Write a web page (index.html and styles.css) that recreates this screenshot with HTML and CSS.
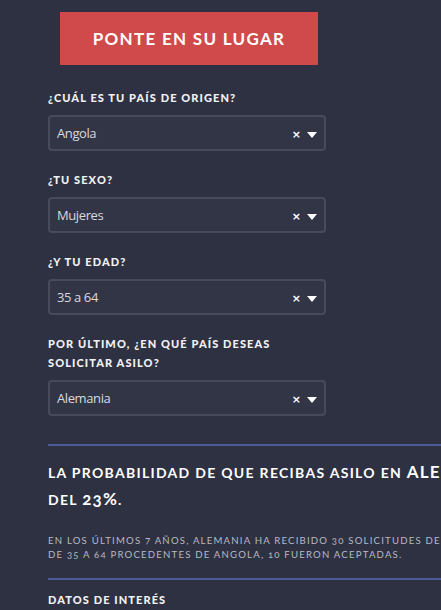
FILE: index.html
```html
<!DOCTYPE html>
<html lang="es">
<head>
<meta charset="utf-8">
<link rel="stylesheet" href="styles.css">
</head>
<body>
<div class="page">
  <div class="btn">PONTE EN SU LUGAR</div>

  <div class="field first">
    <div class="label">¿CUÁL ES TU PAÍS DE ORIGEN?</div>
    <div class="select"><span class="value">Angola</span><span class="ctrl"><span class="clear">×</span><span class="arrow"></span></span></div>
  </div>
  <div class="field">
    <div class="label">¿TU SEXO?</div>
    <div class="select"><span class="value">Mujeres</span><span class="ctrl"><span class="clear">×</span><span class="arrow"></span></span></div>
  </div>
  <div class="field">
    <div class="label">¿Y TU EDAD?</div>
    <div class="select"><span class="value">35 a 64</span><span class="ctrl"><span class="clear">×</span><span class="arrow"></span></span></div>
  </div>
  <div class="field">
    <div class="label narrow">POR ÚLTIMO, ¿EN QUÉ PAÍS DESEAS SOLICITAR ASILO?</div>
    <div class="select"><span class="value">Alemania</span><span class="ctrl"><span class="clear">×</span><span class="arrow"></span></span></div>
  </div>

  <div class="result">
    <hr class="rule">
    <h2 class="headline">LA PROBABILIDAD DE QUE RECIBAS ASILO EN <span class="big">ALEMANIA</span> ES DEL <span class="big">23%</span>.</h2>
    <p class="detail">EN LOS ÚLTIMOS 7 AÑOS, ALEMANIA HA RECIBIDO 30 SOLICITUDES DE ASILO DE MUJERES DE 35 A 64 PROCEDENTES DE ANGOLA, 10 FUERON ACEPTADAS.</p>
    <hr class="rule">
    <div class="label sub">DATOS DE INTERÉS</div>
  </div>
</div>
</body>
</html>
```
FILE: styles.css
```css
html, body {
  margin: 0;
  padding: 0;
  background: #2e3142;
  overflow: hidden;
}
body {
  width: 441px;
  height: 610px;
}
.page {
  padding: 12px 0 0 48px;
  font-family: Lato, "Open Sans", sans-serif;
  color: #ffffff;
}
.btn {
  margin-left: 12px;
  width: 258px;
  height: 53px;
  background: #d04a4b;
  color: #fff;
  font-family: Lato, sans-serif;
  font-weight: 700;
  font-size: 17px;
  letter-spacing: 1.3px;
  display: flex;
  align-items: center;
  justify-content: center;
}
.field {
  margin-top: 19px;
}
.field.first {
  margin-top: 23px;
}
.label {
  font-family: Lato, sans-serif;
  font-weight: 900;
  font-size: 11px;
  letter-spacing: 1.1px;
  line-height: 19px;
  color: #f2f2f4;
  margin-bottom: 8px;
}
.label.narrow {
  width: 240px;
}
.select {
  box-sizing: border-box;
  width: 278px;
  height: 36px;
  border: 2px solid #474a5b;
  border-radius: 4px;
  background: #323546;
  display: flex;
  align-items: center;
  justify-content: space-between;
  padding: 0 7px 0 7px;
}
.value {
  font-family: "Open Sans", sans-serif;
  font-size: 13px;
  color: #d8d9de;
  letter-spacing: -0.4px;
}
.ctrl {
  display: flex;
  align-items: center;
  gap: 6px;
  padding-top: 3px;
}
.clear {
  font-family: "DejaVu Sans", sans-serif;
  font-weight: 700;
  font-size: 11px;
  color: #ffffff;
  line-height: 1;
}
.arrow {
  width: 0;
  height: 0;
  border-left: 5px solid transparent;
  border-right: 5px solid transparent;
  border-top: 6px solid #ffffff;
}
.result {
  width: 600px;
  margin-top: 28px;
}
.rule {
  margin: 0;
  border: 0;
  height: 2px;
  background: #4b5a98;
}
.headline {
  margin: 13px 0 0 0;
  width: 500px;
  font-family: Lato, sans-serif;
  font-weight: 700;
  font-size: 14px;
  letter-spacing: 1.3px;
  line-height: 26px;
  color: #ffffff;
  font-variant-numeric: oldstyle-nums;
}
.big {
  font-size: 17px;
  letter-spacing: 1.2px;
}
.detail {
  margin: 21px 0 16px 0;
  width: 508px;
  font-family: Lato, sans-serif;
  font-size: 9.6px;
  letter-spacing: 1.2px;
  line-height: 14px;
  color: #b8bac4;
  font-variant-numeric: oldstyle-nums;
}
.label.sub {
  margin-top: 10px;
}
```
